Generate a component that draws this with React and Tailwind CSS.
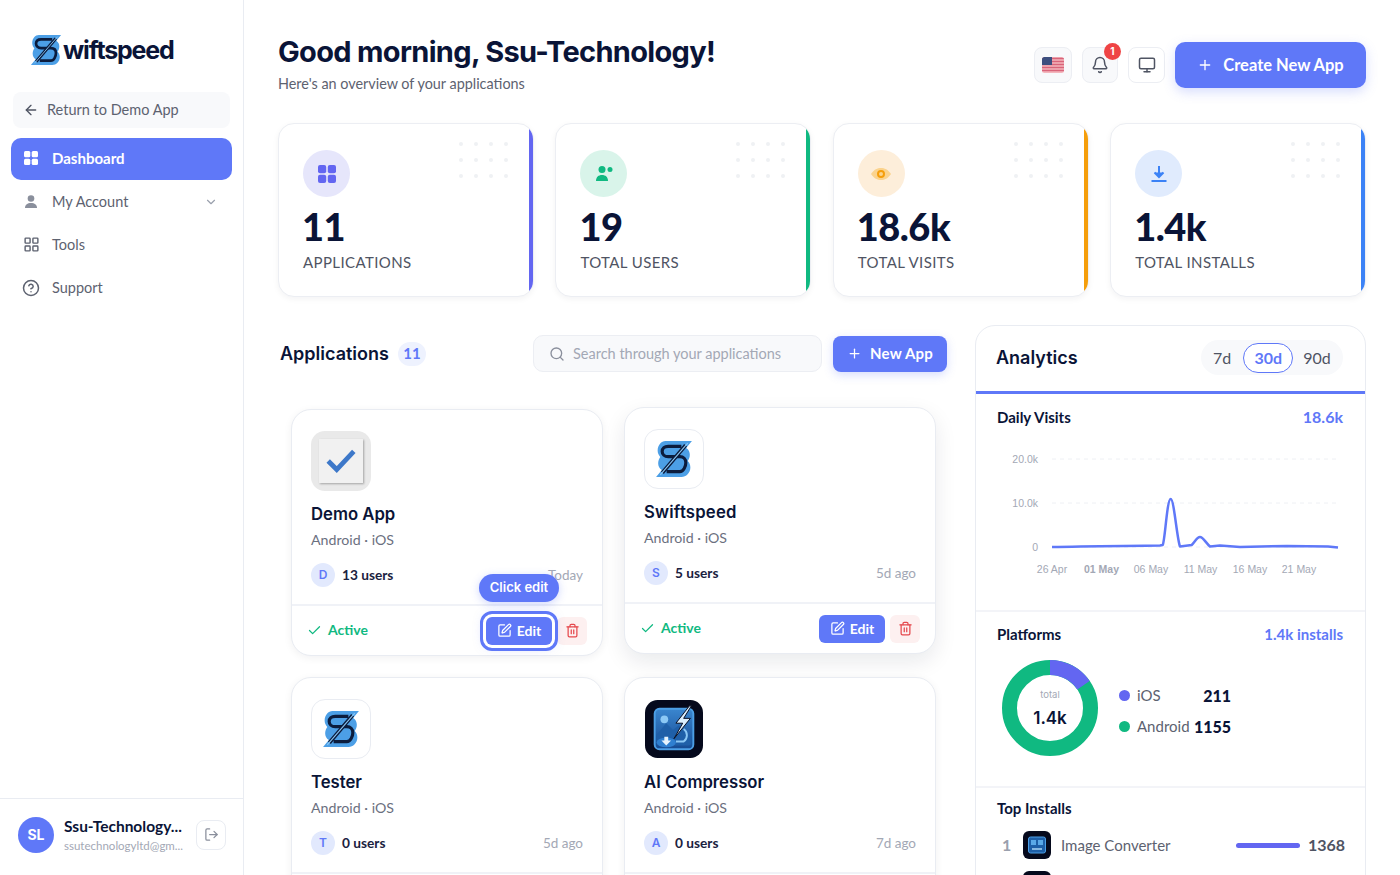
import React from "react";
import {
  ArrowLeft,
  ChevronDown,
  LayoutGrid,
  CircleHelp,
  Bell,
  Monitor,
  Plus,
  Search,
  Check,
  SquarePen,
  Trash2,
  LogOut,
} from "lucide-react";

const FONT = "font-['Lato','Noto_Sans',sans-serif]";

// swiftspeed mark: light blue slanted block, navy S, slash through it
const SwiftMark = ({ className }) => (
  <svg viewBox="0 0 36 36" className={className}>
    <path d="M10 1H35L29.500 7.500C32 9 33 11.500 33 14C33 16.500 32 18.500 31 20C32.500 21.500 33.500 23.500 33.500 26C33.500 31 29.500 35 25 35H1L6.500 28.500C4 27 3 24.500 3 22C3 19.500 4 17.500 5 16C3.500 14.500 2.500 12.500 2.500 10C2.500 5 6 1 10 1Z" fill="#4c9fe6" />
    <path d="M25 6H12.500C9 6 6.800 8 6.800 10.800S9 15.800 12.500 15.800H23.500C27 15.800 29.200 18 29.200 21.500S27 30 23.500 30H11" fill="none" stroke="#0b1c3d" strokeWidth="3" />
    <path d="M29 5 7 31" stroke="#0b1c3d" strokeWidth="3.600" />
    <path d="M31 3 5 33" stroke="#8cc8f5" strokeWidth="1" />
  </svg>
);

const PhotoIcon = ({ className }) => (
  <svg viewBox="0 0 60 60" className={className}>
    <defs>
      <linearGradient id="photoFill" x1="0" y1="0" x2="0" y2="1">
        <stop offset="0" stopColor="#3a86cf" />
        <stop offset="1" stopColor="#164a92" />
      </linearGradient>
    </defs>
    <rect width="60" height="60" rx="13" fill="#05091c" />
    <rect x="10" y="9" width="40" height="42" rx="5" fill="url(#photoFill)" stroke="#4c9fe6" strokeWidth="2" />
    <circle cx="20" cy="20" r="4" fill="#8cc8f5" />
    <path d="M12 36l10-12 7 7 6-5 13 13v5a3 3 0 0 1-3 3H15a3 3 0 0 1-3-3z" fill="#1f5fa8" />
    <path d="M46 6 32 24h7l-9 16 17-21h-7l8-13z" fill="#dbeefc" stroke="#05091c" />
    <path d="M40 30a8 8 0 0 1 0 13h-8" fill="none" stroke="#8cc8f5" strokeWidth="2" />
    <ellipse cx="22" cy="44" rx="10" ry="5" fill="#2f7fd0" />
    <path d="M20 38h4v4h3l-5 5-5-5h3z" fill="#e6f3fd" />
  </svg>
);

const ConverterIcon = ({ className }) => (
  <svg viewBox="0 0 28 28" className={className}>
    <rect width="28" height="28" rx="6" fill="#05091c" />
    <rect x="5.500" y="6" width="17" height="16" rx="2" fill="#1d5fa8" stroke="#4c9fe6" />
    <rect x="8" y="9" width="5" height="5" fill="#5aa9e8" />
    <rect x="15" y="9" width="5" height="5" fill="#5aa9e8" />
    <path d="M9 18h10" stroke="#a9d6f6" strokeWidth="1.500" />
  </svg>
);

const DemoIcon = () => (
  <div className="w-[60px] h-[60px] rounded-[14px] bg-[#e9e9e9] flex items-center justify-center">
    <div className="w-11 h-11 bg-[#f1f1f1] shadow-[1px_1px_2px_rgba(0,0,0,0.3)] flex items-center justify-center">
      <svg viewBox="0 0 30 24" className="w-8 h-[26px]">
        <path d="M3 12l8 8L27 3" fill="none" stroke="#3d78c9" strokeWidth="4.500" />
      </svg>
    </div>
  </div>
);

const FlagIcon = () => (
  <svg viewBox="0 0 22 16" className="w-[22px] h-4">
    <defs>
      <clipPath id="flagClip">
        <rect width="22" height="16" rx="2.500" />
      </clipPath>
    </defs>
    <g clipPath="url(#flagClip)">
      <rect width="22" height="16" fill="#f3b6bd" />
      <path d="M0 1.500h22M0 4.500h22M0 7.500h22M0 10.500h22M0 13.500h22" stroke="#d9647a" strokeWidth="1.300" />
      <rect width="10" height="8" fill="#3d4f7f" />
    </g>
  </svg>
);

const stats = [
  { value: "11", label: "APPLICATIONS", bar: "bg-[#6366f1]", circle: "bg-[#e6e6fb]", icon: "apps" },
  { value: "19", label: "TOTAL USERS", bar: "bg-[#10b981]", circle: "bg-[#d9f4ea]", icon: "users" },
  { value: "18.6k", label: "TOTAL VISITS", bar: "bg-[#f59e0b]", circle: "bg-[#fdeeda]", icon: "eye" },
  { value: "1.4k", label: "TOTAL INSTALLS", bar: "bg-[#3b82f6]", circle: "bg-[#e0ebfd]", icon: "download" },
];

const StatIcon = ({ name }) => {
  if (name === "apps")
    return (
      <svg viewBox="0 0 20 20" className="w-5 h-5" fill="#6366f1">
        <rect x="1" y="1" width="8.200" height="8.200" rx="2" />
        <rect x="10.800" y="1" width="8.200" height="8.200" rx="2" />
        <rect x="1" y="10.800" width="8.200" height="8.200" rx="2" />
        <rect x="10.800" y="10.800" width="8.200" height="8.200" rx="2" />
      </svg>
    );
  if (name === "users")
    return (
      <svg viewBox="0 0 20 20" className="w-5 h-5" fill="#10b981">
        <circle cx="8" cy="5.500" r="3.500" />
        <circle cx="16" cy="5.500" r="2.500" />
        <path d="M2 17c0-4 2.500-6 6-6s6 2 6 6z" />
      </svg>
    );
  if (name === "eye")
    return (
      <svg viewBox="0 0 20 14" className="w-5 h-[14px]">
        <path d="M0 7c3-4.500 6.500-6 10-6s7 1.500 10 6c-3 4.500-6.500 6-10 6S3 11.500 0 7z" fill="#fbd38d" />
        <circle cx="10" cy="7" r="3" fill="none" stroke="#f59e0b" strokeWidth="2" />
      </svg>
    );
  return (
    <svg viewBox="0 0 20 20" className="w-5 h-5" fill="none" stroke="#3b82f6" strokeWidth="2">
      <path d="M10 2v10M5.500 8.500 10 13l4.500-4.500" fill="#3b82f6" />
      <path d="M2.500 17h15" />
    </svg>
  );
};

const StatCard = ({ stat }) => (
  <div className="relative h-[174px] rounded-2xl overflow-hidden bg-white border border-[#eceef3] shadow-[0_2px_6px_rgba(15,23,42,0.05)] pl-6 pt-[26px]">
    <span className={`absolute right-0 inset-y-0 w-1 ${stat.bar}`} />
    <div className="absolute right-[25px] top-[18px] grid grid-cols-4 gap-x-[11px] gap-y-3">
      {Array.from({ length: 12 }).map((_, i) => (
        <span key={i} className="w-1 h-1 rounded-full bg-[#eff1f4]" />
      ))}
    </div>
    <div className={`w-[47px] h-[47px] rounded-full flex items-center justify-center ${stat.circle}`}>
      <StatIcon name={stat.icon} />
    </div>
    <div className="mt-[7px] -ml-px text-[38px] leading-[44px] font-black text-[#0a1437] tracking-[-0.5px]">{stat.value}</div>
    <div className="mt-1 text-[15px] leading-5 text-[#4f5463] tracking-[0.4px]">{stat.label}</div>
  </div>
);

const AppCard = ({ name, icon, initial, users, age, lifted, boxed, titleClass, children }) => (
  <div
    className={`relative h-[247px] rounded-[20px] bg-white border border-[#e9ecf2] flex flex-col ${
      lifted ? "-translate-y-0.5 shadow-[0_8px_22px_rgba(15,23,42,0.09)]" : "shadow-[0_2px_8px_rgba(15,23,42,0.06)]"
    }`}
  >
    <div className="flex-1 px-[19px] pt-[21px]">
      {boxed ? (
        <div className="w-[60px] h-[60px] rounded-[14px] border border-[#e9ecf2] bg-white flex items-center justify-center">{icon}</div>
      ) : (
        <div className="w-[60px] h-[60px] flex items-center justify-center">{icon}</div>
      )}
      <div className={`mt-[11px] font-['Inter',sans-serif] text-[16.700px] leading-6 font-semibold text-[#0a1437] ${titleClass || ""}`}>{name}</div>
      <div className="mt-1 text-[14.200px] leading-5 text-[#6b7080]">Android · iOS</div>
      <div className="mt-[13px] flex items-center">
        <div className="w-6 h-6 rounded-full bg-[#e2e9fd] flex items-center justify-center font-['Inter',sans-serif] text-xs font-semibold text-[#5f78f8]">{initial}</div>
        <span className="ml-[7px] text-[13.700px] font-bold text-[#1b2240]">{users}</span>
        <span className="ml-auto text-[13.500px] text-[#a3a8b5]">{age}</span>
      </div>
    </div>
    <div className="h-[51px] border-t-2 border-[#f0f2f7] flex items-center pl-[15px] pr-[15px]">
      <Check size={15} className="text-[#10b981]" />
      <span className="ml-[6px] pb-[2px] text-sm font-bold text-[#10b981]">Active</span>
      {children}
    </div>
  </div>
);

const EditButton = () => (
  <div className="ml-auto w-[66px] h-7 rounded-md bg-[#5f78f8] text-white text-sm font-bold flex items-center justify-center gap-[5px]">
    <SquarePen size={15} />
    Edit
  </div>
);

const DeleteButton = () => (
  <div className="ml-[5px] w-[30px] h-7 rounded-md bg-[#fdf0f0] flex items-center justify-center">
    <Trash2 size={15} className="text-[#e5484d]" />
  </div>
);

const Sidebar = () => (
  <aside className="w-[244px] shrink-0 h-full border-r border-[#e9ecf2] bg-white flex flex-col">
    <div className="h-[92px] pl-[30px] pt-[34px] flex items-start">
      <SwiftMark className="w-8 h-8" />
      <span className="ml-px font-['Inter',sans-serif] text-[25px] leading-8 font-bold text-[#0a1437] tracking-[-1.200px]">wiftspeed</span>
    </div>
    <div className="mx-[13px] h-9 rounded-lg bg-[#f8f9fb] flex items-center pl-[10px] text-[14.500px] text-[#5d6270]">
      <ArrowLeft size={16} className="text-[#4f5463] mr-2" />
      Return to Demo App
    </div>
    <nav className="mt-[10px] px-[11px] flex flex-col">
      <div className="h-[42px] rounded-[10px] bg-[#5f78f8] flex items-center pl-3 pb-[2px] text-white text-[15px] font-bold">
        <svg viewBox="0 0 16 16" className="w-4 h-4 mr-[13px]" fill="#ffffff">
          <rect x="1" y="1" width="6.300" height="6.300" rx="1.500" />
          <rect x="8.700" y="1" width="6.300" height="6.300" rx="1.500" />
          <rect x="1" y="8.700" width="6.300" height="6.300" rx="1.500" />
          <rect x="8.700" y="8.700" width="6.300" height="6.300" rx="1.500" />
        </svg>
        Dashboard
      </div>
      <div className="h-[43px] mt-[1px] flex items-center pl-3 pr-[14px] pb-[2px] text-[14.500px] text-[#5d6270]">
        <svg viewBox="0 0 16 16" className="w-4 h-4 mr-[13px]" fill="#8a8f9c">
          <circle cx="8" cy="4.500" r="3.300" />
          <path d="M2 14c0-3.500 2.500-5 6-5s6 1.500 6 5z" />
        </svg>
        My Account
        <ChevronDown size={14} className="ml-auto text-[#9aa0ad]" />
      </div>
      <div className="h-[43px] flex items-center pl-3 pb-[2px] text-[14.500px] text-[#5d6270]">
        <LayoutGrid size={17} className="mr-3 text-[#5d6270]" />
        Tools
      </div>
      <div className="h-[43px] flex items-center pl-[11px] pb-[2px] text-[14.500px] text-[#5d6270]">
        <CircleHelp size={18} className="mr-3 text-[#5d6270]" />
        Support
      </div>
    </nav>
    <div className="mt-auto h-[77px] border-t border-[#e9ecf2] flex items-center pl-[18px] pr-[17px] pb-[5px]">
      <div className="w-9 h-9 rounded-full bg-[#5f78f8] flex items-center justify-center font-['Inter',sans-serif] text-[14px] font-bold text-white">SL</div>
      <div className="ml-[10px] w-[120px] whitespace-nowrap">
        <div className="text-[15.500px] leading-5 font-bold text-[#0a1437]">Ssu-Technology...</div>
        <div className="mt-[2px] text-[11.500px] leading-4 text-[#a3a8b5]">ssutechnologyltd@gm...</div>
      </div>
      <div className="ml-auto w-[30px] h-[30px] rounded-lg border border-[#e9ecf2] flex items-center justify-center">
        <LogOut size={15} className="text-[#8a8f9c]" />
      </div>
    </div>
  </aside>
);

const Header = () => (
  <div className="flex items-center justify-between h-[72px]">
    <div className="pb-[3px]">
      <h1 className="font-['Inter',sans-serif] text-[29px] leading-9 font-bold text-[#0a1437] tracking-[-0.680px]">Good morning, Ssu-Technology!</h1>
      <p className="mt-1 text-[14.400px] leading-5 text-[#5d6270]">Here's an overview of your applications</p>
    </div>
    <div className="flex items-center">
      <div className="w-[38px] h-9 rounded-lg border border-[#eceef3] bg-[#f8f9fb] flex items-center justify-center">
        <FlagIcon />
      </div>
      <div className="relative ml-[10px] w-9 h-9 rounded-lg border border-[#eceef3] bg-[#f8f9fb] flex items-center justify-center">
        <Bell size={18} className="text-[#4f5463]" />
        <span className="absolute -top-[5px] -right-[4px] w-[17px] h-[17px] rounded-full bg-[#ef4444] flex items-center justify-center font-['Inter',sans-serif] text-[10px] font-bold text-white">1</span>
      </div>
      <div className="ml-[10px] w-[37px] h-9 rounded-lg border border-[#eceef3] bg-white flex items-center justify-center">
        <Monitor size={18} className="text-[#4f5463]" />
      </div>
      <div className="ml-[10px] w-[191px] h-[46px] rounded-[10px] bg-[#5f78f8] shadow-[0_4px_12px_rgba(95,120,248,0.25)] flex items-center justify-center text-white text-[16.500px] font-bold">
        <Plus size={16} className="mr-[10px]" />
        Create New App
      </div>
    </div>
  </div>
);

const Chart = () => (
  <svg viewBox="0 0 350 140" className="w-[350px] h-[140px] block">
    <path d="M57 10h288M57 54h288M57 98h288" stroke="#eef0f4" strokeDasharray="4 4" />
    <path
      d="M57 98 C90 97 130 97 165 96.500 L167.700 96 C170 92 172 50 175.700 50 C179 50 182 90 185 97.500 L196.700 96 C199 94 202 88 205 88 C208 88 211 94 215 97.500 L225 96.500 L245 98 L292 97 L333 97.500 L343 98.500"
      fill="none"
      stroke="#5f78f8"
      strokeWidth="2.500"
      strokeLinejoin="round"
    />
    <g fontFamily="Liberation Sans, sans-serif" fontSize="10.500" fill="#a3a8b5">
      <text x="43" y="14" textAnchor="end">20.0k</text>
      <text x="43" y="58" textAnchor="end">10.0k</text>
      <text x="43" y="102" textAnchor="end">0</text>
      <text x="57" y="124" textAnchor="middle">26 Apr</text>
      <text x="106.500" y="124" textAnchor="middle" fontWeight="700">01 May</text>
      <text x="156" y="124" textAnchor="middle">06 May</text>
      <text x="205.500" y="124" textAnchor="middle">11 May</text>
      <text x="255" y="124" textAnchor="middle">16 May</text>
      <text x="304" y="124" textAnchor="middle">21 May</text>
    </g>
  </svg>
);

const Analytics = () => (
  <div className="w-[391px] shrink-0 h-[600px] rounded-t-[20px] bg-white border border-[#e9ecf2] overflow-hidden">
    <div className="h-[68px] border-b-[3px] border-[#5f78f8] flex items-center justify-between pl-5 pr-[22px] pb-[2px]">
      <span className="font-['Inter',sans-serif] text-[18px] font-semibold text-[#0a1437]">Analytics</span>
      <div className="w-[142px] h-[35px] rounded-full bg-[#f8f9fb] flex items-center pl-[12px] text-[16px] text-[#4f5463]">
        <span>7d</span>
        <span className="ml-[12px] w-[50px] h-[30px] rounded-full border border-[#5f78f8] bg-white flex items-center justify-center font-bold text-[#5f78f8]">30d</span>
        <span className="ml-[10px]">90d</span>
      </div>
    </div>
    <div className="h-[218px] border-b-2 border-[#f3f4f8] pl-[21px] pr-[22px] pt-[13px]">
      <div className="flex items-center justify-between">
        <span className="text-[15px] leading-5 font-bold text-[#0a1437]">Daily Visits</span>
        <span className="text-[16px] leading-5 font-bold text-[#5f78f8]">18.6k</span>
      </div>
      <div className="-ml-[2px] mt-[22px]">
        <Chart />
      </div>
    </div>
    <div className="h-[176px] border-b-2 border-[#f3f4f8] pl-[21px] pr-[22px] pt-3">
      <div className="flex items-center justify-between">
        <span className="text-[15px] leading-5 font-bold text-[#0a1437]">Platforms</span>
        <span className="text-[15px] leading-5 font-bold text-[#5f78f8]">1.4k installs</span>
      </div>
      <div className="mt-4 flex items-center pl-[5px]">
        <div className="relative w-[96px] h-[96px]">
          <svg viewBox="0 0 96 96" className="w-[96px] h-[96px] -rotate-90">
            <circle cx="48" cy="48" r="40.500" fill="none" stroke="#10b981" strokeWidth="15" />
            <circle cx="48" cy="48" r="40.500" fill="none" stroke="#6366f1" strokeWidth="15" strokeDasharray="39.300 254.500" />
          </svg>
          <div className="absolute inset-0 flex flex-col items-center justify-center">
            <span className="font-['Inter',sans-serif] text-[9.500px] leading-3 text-[#a3a8b5]">total</span>
            <span className="mt-[7px] font-['Inter',sans-serif] text-[17px] leading-5 font-semibold text-[#0a1437]">1.4k</span>
          </div>
        </div>
        <div className="ml-[21px] w-[112px] pt-[6px]">
          <div className="flex items-center h-6">
            <span className="w-[11px] h-[11px] rounded-full bg-[#6366f1] mr-[7px]" />
            <span className="text-[15px] text-[#5d6270]">iOS</span>
            <span className="ml-auto text-[16px] font-black text-[#0a1437]">211</span>
          </div>
          <div className="mt-[7px] flex items-center h-6">
            <span className="w-[11px] h-[11px] rounded-full bg-[#10b981] mr-[7px]" />
            <span className="text-[15px] text-[#5d6270]">Android</span>
            <span className="ml-auto text-[16px] font-black text-[#0a1437]">1155</span>
          </div>
        </div>
      </div>
    </div>
    <div className="pl-[21px] pr-5 pt-2">
      <span className="text-[15px] leading-5 font-bold text-[#0a1437]">Top Installs</span>
      <div className="mt-[11px] flex items-center">
        <span className="ml-[5px] w-[21px] text-[16px] font-bold text-[#9aa0ad]">1</span>
        <ConverterIcon className="w-7 h-7" />
        <span className="ml-[10px] text-[15px] text-[#5d6270]">Image Converter</span>
        <span className="ml-auto w-16 h-[5px] rounded-full bg-[#6366f1]" />
        <span className="ml-2 text-[16px] font-bold text-[#4f5463]">1368</span>
      </div>
      <div className="mt-3 ml-[26px]">
        <ConverterIcon className="w-7 h-7" />
      </div>
    </div>
  </div>
);

const App = () => (
  <div className={`h-screen w-full overflow-hidden flex bg-white ${FONT}`}>
    <Sidebar />
    <main className="flex-1 min-w-0 pl-[34px] pr-[34px] pt-[29px] overflow-hidden">
      <Header />
      <div className="mt-[22px] grid grid-cols-4 gap-[21.500px]">
        {stats.map((s) => (
          <StatCard key={s.label} stat={s} />
        ))}
      </div>
      <div className="mt-[28px] flex gap-[28px]">
        <div className="w-[669px] shrink-0">
          <div className="flex items-center h-[37px] mt-[10px]">
            <span className="ml-[2px] font-['Inter',sans-serif] text-[18px] font-semibold text-[#0a1437]">Applications</span>
            <span className="ml-[9px] w-[28px] h-[24px] rounded-full bg-[#eef2fe] flex items-center justify-center text-[15px] font-bold text-[#5f78f8]">11</span>
            <div className="ml-auto w-[289px] h-[37px] rounded-[10px] border border-[#eceef3] bg-[#f8f9fb] flex items-center pl-[15px] text-[14.500px] text-[#a3a8b5]">
              <Search size={16} className="text-[#8a8f9c] mr-2" />
              Search through your applications
            </div>
            <div className="ml-[11px] w-[114px] h-9 rounded-lg bg-[#5f78f8] shadow-[0_3px_10px_rgba(95,120,248,0.25)] flex items-center justify-center text-white text-[15px] tracking-[0.2px] font-bold">
              <Plus size={15} className="mr-2" />
              New App
            </div>
          </div>
          <div className="mt-[37px] ml-[13px] grid grid-cols-[312px_312px] gap-[21px]">
            <AppCard name="Demo App" icon={<DemoIcon />} initial="D" users="13 users" age="Today">
              <div className="relative ml-auto">
                <div className="absolute -top-[43px] -left-[7px] w-[80px] h-7 rounded-full bg-[#5f78f8] shadow-[0_2px_8px_rgba(95,120,248,0.3)] flex items-center justify-center font-['Inter',sans-serif] text-[13px] font-semibold text-white">Click edit</div>
                <div className="w-[66px] h-7 rounded-md bg-[#5f78f8] ring-[3px] ring-white outline-[3px] outline-offset-[3px] outline-[#5f78f8] shadow-[0_0_12px_rgba(95,120,248,0.5)] text-white text-sm font-bold flex items-center justify-center gap-[5px]">
                  <SquarePen size={15} />
                  Edit
                </div>
              </div>
              <DeleteButton />
            </AppCard>
            <AppCard name="Swiftspeed" lifted boxed icon={<SwiftMark className="w-[38px] h-[38px]" />} initial="S" users="5 users" age="5d ago" titleClass="tracking-[0.2px]">
              <EditButton />
              <DeleteButton />
            </AppCard>
            <AppCard name="Tester" boxed icon={<SwiftMark className="w-[38px] h-[38px]" />} initial="T" users="0 users" age="5d ago">
              <EditButton />
              <DeleteButton />
            </AppCard>
            <AppCard name="AI Compressor" icon={<PhotoIcon className="w-[58px] h-[58px]" />} initial="A" users="0 users" age="7d ago">
              <EditButton />
              <DeleteButton />
            </AppCard>
          </div>
        </div>
        <Analytics />
      </div>
    </main>
  </div>
);

export default App;
